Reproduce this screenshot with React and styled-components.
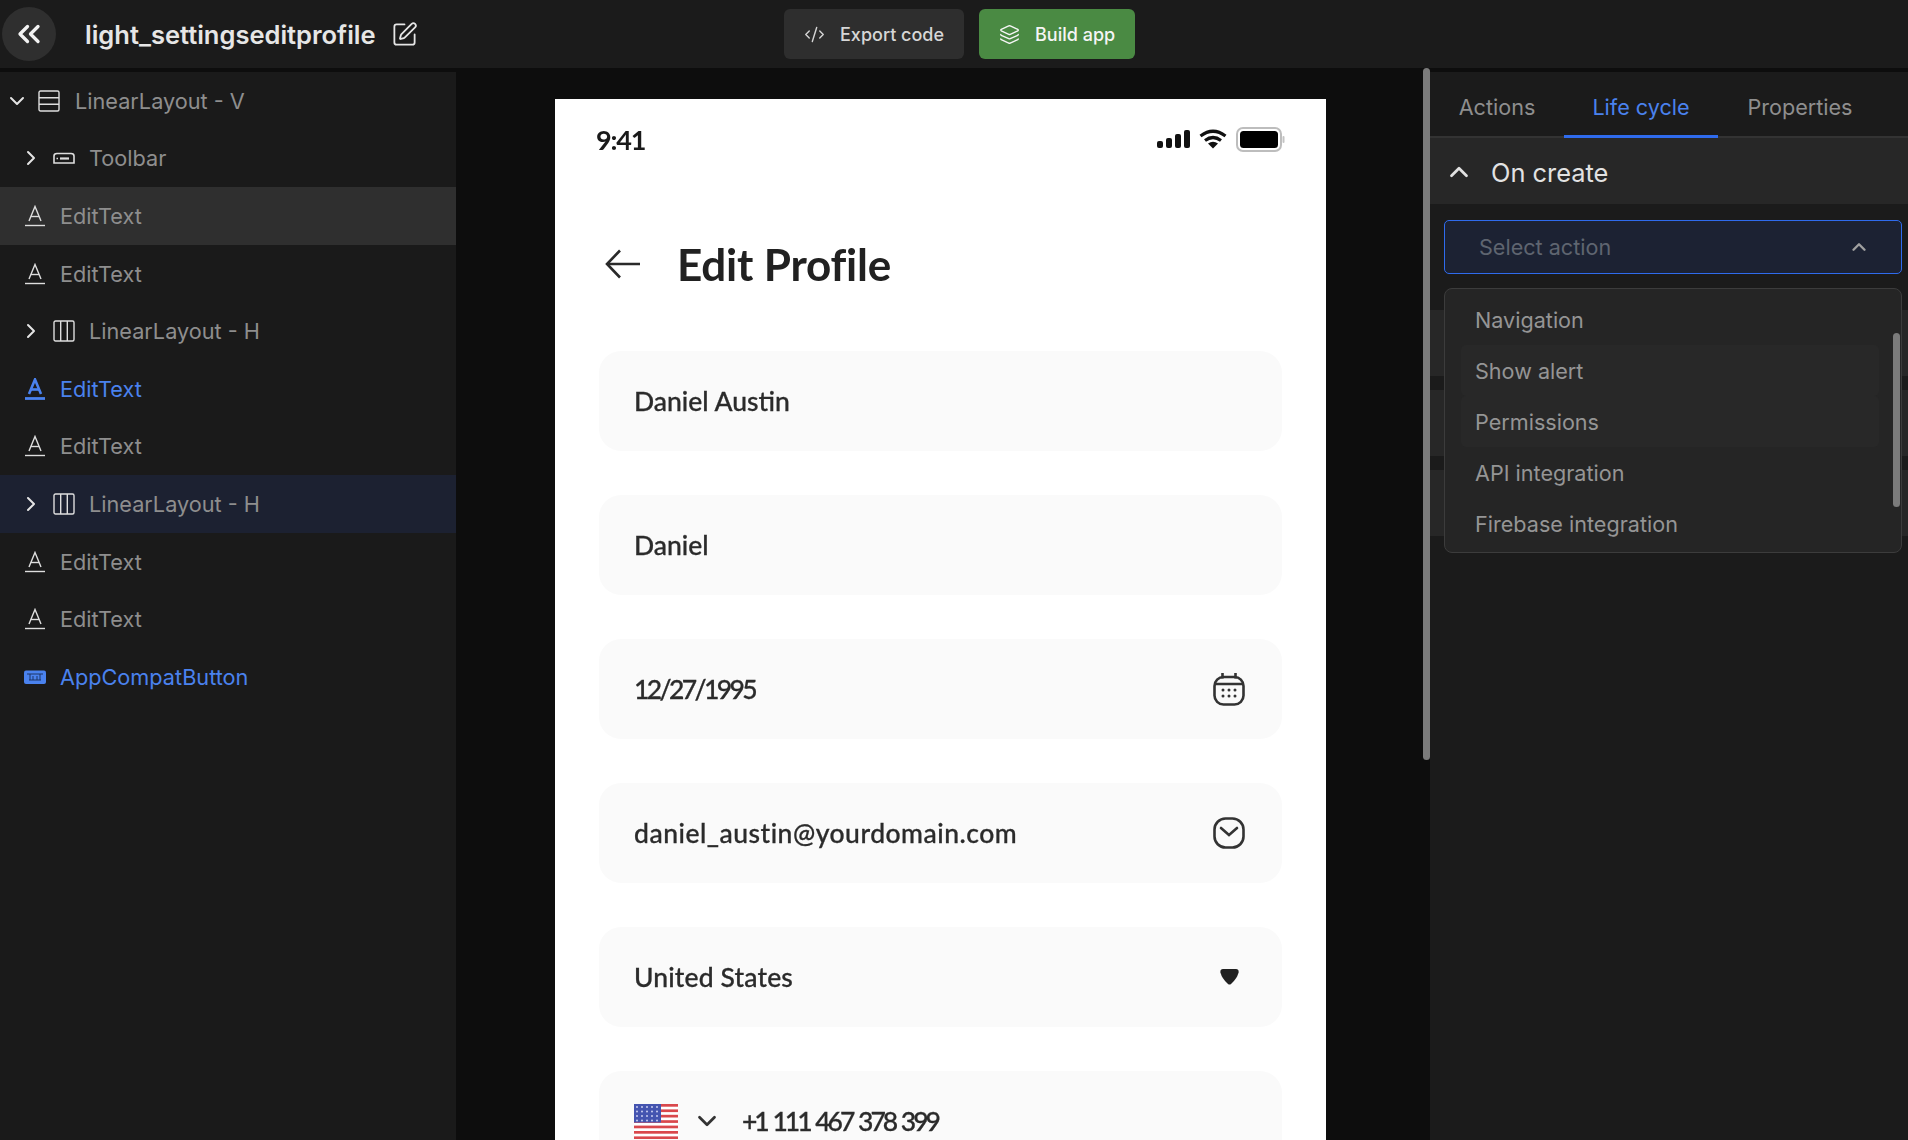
import React from 'react';
import styled, { createGlobalStyle } from 'styled-components';
import {
  ChevronsLeft,
  ChevronDown,
  ChevronRight,
  ChevronUp,
  SquarePen,
  CodeXml,
  Layers,
} from 'lucide-react';

const GlobalStyle = createGlobalStyle`
  html, body {
    margin: 0;
    height: 100%;
    overflow: hidden;
    background: #0d0d0d;
    font-family: Inter, "Liberation Sans", sans-serif;
  }
  * { box-sizing: border-box; }
  svg { flex: none; }
`;

const Page = styled.div`
  display: flex;
  flex-direction: column;
  height: 100vh;
  overflow: hidden;
`;

const Header = styled.header`
  display: grid;
  grid-template-columns: 784px auto;
  align-items: center;
  flex: none;
  height: 68px;
  background: #1b1b1b;
`;

const TitleGroup = styled.div`
  display: flex;
  align-items: center;
  padding-left: 2px;
`;

const BackButton = styled.div`
  display: flex;
  align-items: center;
  justify-content: center;
  width: 54px;
  height: 54px;
  border-radius: 50%;
  background: #2f2f2f;
  color: #f2f2f2;
`;

const Title = styled.div`
  margin-left: 29px;
  font-size: 25.5px;
  font-weight: 600;
  color: #e6e6e6;
`;

const EditIcon = styled(SquarePen)`
  margin-left: 15px;
  color: #e6e6e6;
`;

const Actions = styled.div`
  display: flex;
  gap: 15px;
`;

const HeaderButton = styled.div`
  display: flex;
  align-items: center;
  gap: 15px;
  height: 50px;
  padding: 0 20px;
  border-radius: 6px;
  font-size: 18px;
  font-weight: 500;
  background: ${(p) => (p.$primary ? '#4a8a43' : '#2e2e2e')};
  color: ${(p) => (p.$primary ? '#f5f5f5' : '#d6d6d6')};
`;

const Workspace = styled.div`
  display: flex;
  flex: 1;
  min-height: 0;
  margin-top: 4px;
`;

const Sidebar = styled.aside`
  flex: none;
  width: 456px;
  background: #1a1a1a;
`;

const TreeRow = styled.div`
  display: flex;
  align-items: center;
  height: 57.6px;
  padding-left: ${(p) => p.$indent}px;
  font-size: 21.7px;
  color: ${(p) => (p.$blue ? '#4a82ee' : '#8e8e8e')};
  background: ${(p) =>
    p.$tone === 'grey' ? '#2f2f2f' : p.$tone === 'navy' ? '#1c2131' : 'transparent'};
`;

const TreeChevron = styled.span`
  display: flex;
  justify-content: center;
  flex: none;
  width: ${(p) => p.$width}px;
  margin-right: ${(p) => p.$gap}px;
  color: #e4e4e4;
`;

const TreeIcon = styled.span`
  display: flex;
  flex: none;
  width: ${(p) => p.$width}px;
  color: ${(p) => (p.$blue ? '#4a82ee' : '#dedede')};
`;

const Canvas = styled.main`
  flex: 1;
  min-width: 0;
  padding: 27px 0 0 99px;
  overflow: hidden;
`;

const ScrollTrack = styled.div`
  flex: none;
  width: 7px;
`;

const ScrollThumb = styled.div`
  width: 7px;
  height: 692px;
  margin-top: -4px;
  border-radius: 4px;
  background: #7b7b7b;
`;

const Phone = styled.div`
  width: 771px;
  height: 1100px;
  padding: 0 44px 0 44px;
  background: #fff;
  color: #212121;
  font-family: Lato, "Open Sans", sans-serif;
  filter: blur(0.45px);
`;

const StatusBar = styled.div`
  display: flex;
  align-items: center;
  justify-content: space-between;
  height: 80px;
  margin-right: -3px;
`;

const Clock = styled.div`
  margin-left: -3px;
  font-size: 27px;
  font-weight: 700;
  letter-spacing: -1.2px;
  color: #1a1a1a;
`;

const StatusIcons = styled.div`
  display: flex;
  align-items: center;
  gap: 9px;
`;

const ScreenHeader = styled.div`
  display: flex;
  align-items: center;
  gap: 36px;
  height: 90px;
  margin-top: 40px;
  margin-bottom: 42px;
  padding-left: 6px;
`;

const ScreenTitle = styled.h1`
  margin: 0;
  font-size: 44px;
  font-weight: 700;
  letter-spacing: -0.2px;
  color: #212121;
`;

const FieldList = styled.div`
  display: flex;
  flex-direction: column;
  gap: 44px;
`;

const Field = styled.div`
  display: flex;
  align-items: center;
  justify-content: space-between;
  height: 100px;
  padding: 0 37px 0 35px;
  border-radius: 22px;
  background: #fafafa;
  font-size: 26.5px;
  font-weight: 500;
  -webkit-text-stroke: 0.3px #2b2b2b;
  color: #2b2b2b;
  letter-spacing: ${(p) => p.$spacing || '0'};
  word-spacing: ${(p) => p.$wordSpacing || '0'};
`;

const PhoneValue = styled.div`
  display: flex;
  align-items: center;
`;

const FlagChevron = styled(ChevronDown)`
  margin: 0 20px 0 14px;
  color: #333;
`;

const Inspector = styled.aside`
  position: relative;
  flex: none;
  width: 478px;
  background: #1b1b1b;
`;

const Tabs = styled.div`
  display: flex;
  height: 66px;
  border-bottom: 2px solid #333;
`;

const Tab = styled.div`
  display: flex;
  align-items: center;
  justify-content: center;
  flex: none;
  width: ${(p) => p.$width}px;
  height: 66px;
  padding-top: 6px;
  font-size: 21.6px;
  color: ${(p) => (p.$active ? '#4a82ee' : '#8e8e8e')};
  border-bottom: 3px solid ${(p) => (p.$active ? '#2f6bed' : 'transparent')};
`;

const SectionRow = styled.div`
  display: flex;
  align-items: center;
  gap: 17px;
  height: 66px;
  padding: 2px 0 0 14px;
  background: #272727;
  font-size: 25.4px;
  color: #e2e2e2;
`;

const SectionStack = styled.div`
  display: flex;
  flex-direction: column;
  gap: 14px;
`;

const SelectWrap = styled.div`
  padding: 16px 6px 36px 14px;
`;

const SelectBox = styled.div`
  display: flex;
  align-items: center;
  justify-content: space-between;
  height: 54px;
  padding: 0 31px 0 34px;
  border: 1px solid #2f6bed;
  border-radius: 5px;
  background: #1c2233;
  font-size: 21.6px;
  color: #5f6570;
`;

const Menu = styled.div`
  position: absolute;
  top: 216px;
  left: 14px;
  right: 6px;
  height: 265px;
  padding: 5px 22px 5px 16px;
  border: 1px solid #3c3c3c;
  border-radius: 8px;
  background: #252525;
`;

const MenuItem = styled.div`
  display: flex;
  align-items: center;
  height: 51px;
  padding-left: 14px;
  border-radius: 5px;
  font-size: 21.6px;
  color: #959595;
  background: ${(p) => (p.$hover ? '#282828' : 'transparent')};
`;

const MenuScroll = styled.div`
  position: absolute;
  top: 44px;
  right: 1px;
  width: 7px;
  height: 174px;
  border-radius: 4px;
  background: #7b7b7b;
`;

const TextIcon = ({ bold }) => (
  <svg width="22" height="22" viewBox="0 0 22 22" fill="none" stroke="currentColor" strokeWidth={bold ? 2.6 : 1.4}>
    <path d="M5 16 L11 1.5 L17 16" />
    <path d="M7 11.5 H15" />
    <path d="M1 20.5 H21" strokeWidth={bold ? 2.8 : 1.4} />
  </svg>
);

const VerticalIcon = () => (
  <svg width="22" height="22" viewBox="0 0 22 22" fill="none" stroke="currentColor" strokeWidth="1.4">
    <rect x="1" y="1" width="20" height="20" rx="1.5" />
    <path d="M1 7.7 H21 M1 14.3 H21" />
  </svg>
);

const HorizontalIcon = () => (
  <svg width="22" height="22" viewBox="0 0 22 22" fill="none" stroke="currentColor" strokeWidth="1.4">
    <rect x="1" y="1" width="20" height="20" rx="1.5" />
    <path d="M7.7 1 V21 M14.3 1 V21" />
  </svg>
);

const ToolbarIcon = () => (
  <svg width="22" height="22" viewBox="0 0 22 22" fill="none">
    <path d="M1 16 V9 Q1 6.5 4 6.5 H18 Q21 6.5 21 9 V16 Z" stroke="currentColor" strokeWidth="1.6" />
    <path d="M7 11.5 H16" stroke="currentColor" strokeWidth="2.2" />
    <path d="M3.5 11.5 H5" stroke="currentColor" strokeWidth="1.4" />
  </svg>
);

const ButtonIcon = () => (
  <svg width="22" height="22" viewBox="0 0 22 22">
    <rect x="0" y="4.5" width="22" height="13.5" rx="2" fill="currentColor" />
    <path d="M3 8 H19 M6 8 V14 M9 10 V14 M13 10 V14 M16 8 V14 M5 14 H17" stroke="#1c3566" strokeWidth="1" fill="none" />
  </svg>
);

const BackArrow = () => (
  <svg width="36" height="30" viewBox="0 0 36 30" fill="none" stroke="#2a2a2a" strokeWidth="2.6">
    <path d="M35 15 H2" />
    <path d="M15 1.5 L2 15 L15 28.5" />
  </svg>
);

const SignalIcon = () => (
  <svg width="33" height="18" viewBox="0 0 33 18" fill="#111">
    <rect x="0" y="11" width="6" height="7" rx="2" />
    <rect x="9" y="8" width="6" height="10" rx="2" />
    <rect x="18" y="4" width="6" height="14" rx="2" />
    <rect x="27" y="0" width="6" height="18" rx="2" />
  </svg>
);

const WifiIcon = () => (
  <svg width="28" height="20" viewBox="0 0 28 20" fill="none" stroke="#111" strokeWidth="3.2">
    <path d="M1.5 7 Q14 -2.5 26.5 7" />
    <path d="M6 11.5 Q14 5.5 22 11.5" />
    <path d="M14 19.5 L9 14.5 Q14 11 19 14.5 Z" fill="#111" stroke="none" />
  </svg>
);

const BatteryIcon = () => (
  <svg width="49" height="25" viewBox="0 0 49 25">
    <rect x="1" y="1" width="44" height="23" rx="6" fill="#fff" stroke="#bdbdbd" strokeWidth="2" />
    <rect x="4" y="4" width="38" height="17" rx="3.5" fill="#000" />
    <rect x="46.5" y="9" width="2" height="7" rx="1" fill="#c4c4c4" />
  </svg>
);

const CalendarIcon = () => (
  <svg width="32" height="34" viewBox="0 0 32 34" fill="none" stroke="#333" strokeWidth="2.6">
    <rect x="1.5" y="5" width="29" height="27.5" rx="9" />
    <path d="M9.5 1 V6.5 M22.5 1 V6.5 M2 12 H30" />
    <g fill="#333" stroke="none">
      <circle cx="10" cy="18" r="1.5" /><circle cx="16" cy="18" r="1.5" /><circle cx="22" cy="18" r="1.5" />
      <circle cx="10" cy="24" r="1.5" /><circle cx="16" cy="24" r="1.5" /><circle cx="22" cy="24" r="1.5" />
    </g>
  </svg>
);

const MailIcon = () => (
  <svg width="32" height="32" viewBox="0 0 32 32" fill="none" stroke="#333" strokeWidth="2.6">
    <rect x="1.5" y="1.5" width="29" height="29" rx="11" />
    <path d="M8 11 L16 18 L24 11" strokeLinecap="round" />
  </svg>
);

const DropIcon = () => (
  <svg width="19" height="16" viewBox="0 0 19 16" fill="#212121" style={{ marginRight: 6 }}>
    <path d="M3 0 H16 Q19 0 18.6 3.4 Q17 9.5 11 15 Q9.5 16.2 8 15 Q2 9.5 0.4 3.4 Q0 0 3 0 Z" />
  </svg>
);

const FlagIcon = () => (
  <svg width="44" height="35" viewBox="0 0 44 35">
    <rect width="44" height="35" fill="#fff" />
    {[0, 5.4, 10.8, 16.2, 21.6, 27, 32.4].map((y) => (
      <rect key={y} y={y} width="44" height="2.7" fill="#d9484c" />
    ))}
    <rect width="27" height="18.5" fill="#4454b0" />
    {[3, 7.5, 12, 16.5].map((y) =>
      [3, 8, 13, 18, 23].map((x) => <circle key={`${x}-${y}`} cx={x} cy={y} r="1" fill="#c9cdf0" />)
    )}
  </svg>
);

const treeRows = [
  { label: 'LinearLayout - V', indent: 10, chevron: 'down', chevronWidth: 14, gap: 14, iconWidth: 37, icon: <VerticalIcon /> },
  { label: 'Toolbar', indent: 25, chevron: 'right', chevronWidth: 12, gap: 16, iconWidth: 36, icon: <ToolbarIcon /> },
  { label: 'EditText', indent: 24, tone: 'grey', iconWidth: 36, icon: <TextIcon /> },
  { label: 'EditText', indent: 24, iconWidth: 36, icon: <TextIcon /> },
  { label: 'LinearLayout - H', indent: 25, chevron: 'right', chevronWidth: 12, gap: 16, iconWidth: 36, icon: <HorizontalIcon /> },
  { label: 'EditText', indent: 24, blue: true, iconWidth: 36, icon: <TextIcon bold /> },
  { label: 'EditText', indent: 24, iconWidth: 36, icon: <TextIcon /> },
  { label: 'LinearLayout - H', indent: 25, tone: 'navy', chevron: 'right', chevronWidth: 12, gap: 16, iconWidth: 36, icon: <HorizontalIcon /> },
  { label: 'EditText', indent: 24, iconWidth: 36, icon: <TextIcon /> },
  { label: 'EditText', indent: 24, iconWidth: 36, icon: <TextIcon /> },
  { label: 'AppCompatButton', indent: 24, blue: true, iconWidth: 36, icon: <ButtonIcon /> },
];

const menuItems = ['Navigation', 'Show alert', 'Permissions', 'API integration', 'Firebase integration'];

const App = () => {
  return (
    <Page>
      <GlobalStyle />
      <Header>
        <TitleGroup>
          <BackButton>
            <ChevronsLeft size={36} strokeWidth={2.2} />
          </BackButton>
          <Title>light_settingseditprofile</Title>
          <EditIcon size={27} strokeWidth={1.6} />
        </TitleGroup>
        <Actions>
          <HeaderButton>
            <CodeXml size={21} strokeWidth={1.6} />
            Export code
          </HeaderButton>
          <HeaderButton $primary>
            <Layers size={21} strokeWidth={1.6} />
            Build app
          </HeaderButton>
        </Actions>
      </Header>

      <Workspace>
        <Sidebar>
          {treeRows.map((row, i) => (
            <TreeRow key={i} $indent={row.indent} $tone={row.tone} $blue={row.blue}>
              {row.chevron && (
                <TreeChevron $width={row.chevronWidth} $gap={row.gap}>
                  {row.chevron === 'down' ? <ChevronDown size={24} strokeWidth={2} /> : <ChevronRight size={24} strokeWidth={2} />}
                </TreeChevron>
              )}
              <TreeIcon $width={row.iconWidth} $blue={row.blue}>{row.icon}</TreeIcon>
              {row.label}
            </TreeRow>
          ))}
        </Sidebar>

        <Canvas>
          <Phone>
            <StatusBar>
              <Clock>9:41</Clock>
              <StatusIcons>
                <SignalIcon />
                <WifiIcon />
                <BatteryIcon />
              </StatusIcons>
            </StatusBar>
            <ScreenHeader>
              <BackArrow />
              <ScreenTitle>Edit Profile</ScreenTitle>
            </ScreenHeader>
            <FieldList>
              <Field>Daniel Austin</Field>
              <Field>Daniel</Field>
              <Field $spacing="-2.6px">12/27/1995<CalendarIcon /></Field>
              <Field $spacing="0.5px">daniel_austin@yourdomain.com<MailIcon /></Field>
              <Field $spacing="0.15px">United States<DropIcon /></Field>
              <Field $spacing="-3px" $wordSpacing="2px">
                <PhoneValue>
                  <FlagIcon />
                  <FlagChevron size={30} strokeWidth={2.2} />
                  +1 111 467 378 399
                </PhoneValue>
              </Field>
            </FieldList>
          </Phone>
        </Canvas>

        <ScrollTrack>
          <ScrollThumb />
        </ScrollTrack>

        <Inspector>
          <Tabs>
            <Tab $width={134}>Actions</Tab>
            <Tab $width={154} $active>Life cycle</Tab>
            <Tab $width={164}>Properties</Tab>
          </Tabs>
          <SectionRow>
            <ChevronUp size={30} strokeWidth={2.2} />
            On create
          </SectionRow>
          <SelectWrap>
            <SelectBox>
              Select action
              <ChevronUp size={22} strokeWidth={2.6} color="#a0a0a0" />
            </SelectBox>
          </SelectWrap>
          <SectionStack>
            <SectionRow />
            <SectionRow />
            <SectionRow />
          </SectionStack>
          <Menu>
            {menuItems.map((item, i) => (
              <MenuItem key={item} $hover={i === 1 || i === 2}>{item}</MenuItem>
            ))}
            <MenuScroll />
          </Menu>
        </Inspector>
      </Workspace>
    </Page>
  );
};

export default App;
